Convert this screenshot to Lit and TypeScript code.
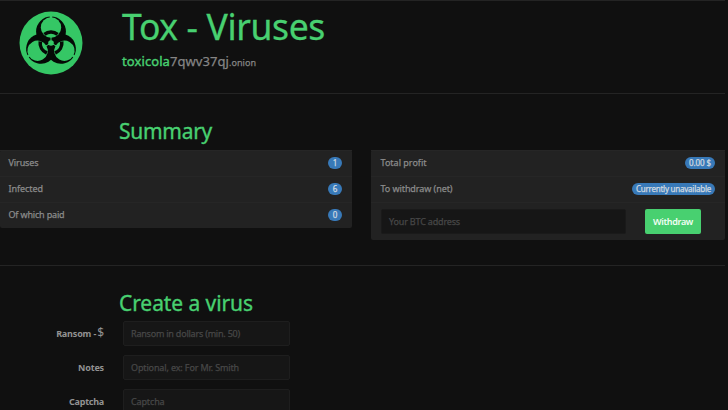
import { LitElement, html, css } from "lit";
import { customElement, property } from "lit/decorators.js";

/** Line of text whose tracking is adjusted to fill a given width. */
@customElement("fit-text")
class FitText extends LitElement {
  static styles = css`
    :host { display: inline-block; white-space: pre; }
    .t { display: inline-block; white-space: pre; }
  `;
  @property({ type: Number }) w = 0;
  @property() text = "";
  render() {
    return html`<span class="t">${this.text}</span>`;
  }
  updated() {
    const t = this.renderRoot.querySelector(".t") as HTMLElement;
    t.style.letterSpacing = "0px";
    const gap = (this.w - t.getBoundingClientRect().width) / this.text.length;
    t.style.letterSpacing = gap.toFixed(3) + "px";
  }
}

@customElement("bio-logo")
class BioLogo extends LitElement {
  static styles = css`
    :host, svg { display: block; }
    .g { fill: #35c765; }
    .gs { fill: none; stroke: #35c765; }
    .k { fill: #050a06; }
    .ks { fill: none; stroke: #050a06; }
  `;
  render() {
    return html`<svg width="64" height="64" viewBox="-32 -32 64 64">
      <defs>
        <g id="disc"><circle class="k" cy="-11.5" r="14.9" /></g>
        <g id="hole">
          <circle class="g" cy="-15.5" r="10.2" />
          <path class="gs" stroke-width="2.4" d="M0-23V-29" />
        </g>
        <path id="arc" class="ks" stroke-width="3.6" d="M-6.6-8.6A10.8 10.8 0 0 1 6.6-8.6" />
      </defs>
      <circle class="g" r="31.5" />
      <use href="#disc" /><use href="#disc" transform="rotate(120)" /><use href="#disc" transform="rotate(240)" />
      <use href="#hole" /><use href="#hole" transform="rotate(120)" /><use href="#hole" transform="rotate(240)" />
      <circle class="g" r="2.8" />
      <path class="gs" stroke-width="1" d="M0 0V-6M0 0L5.2 3M0 0L-5.2 3" transform="rotate(0)" />
      <use href="#arc" /><use href="#arc" transform="rotate(120)" /><use href="#arc" transform="rotate(240)" />
    </svg>`;
  }
}

const STATS = [
  { label: "Viruses", w: 30, value: "1" },
  { label: "Infected", w: 34.5, value: "6" },
  { label: "Of which paid", w: 56, value: "0" },
];
const FIELDS = [
  { label: "Ransom -", w: 40, hint: "Ransom in dollars (min. 50)", hw: 109, dollar: true },
  { label: "Notes", w: 26, hint: "Optional, ex: For Mr. Smith", hw: 108, dollar: false },
  { label: "Captcha", w: 35, hint: "Captcha", hw: 33.5, dollar: false },
];

@customElement("app-root")
class AppRoot extends LitElement {
  static styles = css`
    * { box-sizing: border-box; }
    :host {
      display: block; width: 728px; height: 410px; overflow: hidden;
      background: #101010; color: #8b8b8b;
      font: 9px/14px "Noto Sans", "Open Sans", sans-serif;
      -webkit-text-stroke: 0.25px currentColor;
    }
    .page { width: 725px; }
    header { display: flex; height: 94px; border-top: 1px solid #242424; border-bottom: 1px solid #242424; }
    .logo { margin: 10px 0 0 19px; }
    .brand { margin-left: 39px; }
    h1, h2 { margin: 0; font-weight: 400; color: #48d070; }
    h1 { height: 49px; font-size: 35.5px; line-height: 51px; -webkit-text-stroke-width: 0.3px; }
    .host { display: flex; align-items: baseline; font-size: 13px; line-height: 23px; color: #858585; }
    .host .a { color: #48d070; -webkit-text-stroke-width: 0.4px; }
    .host .c { font-size: 9px; }
    h2 { font-size: 21px; line-height: 28px; padding-left: 119px; -webkit-text-stroke-width: 0.35px; }
    .summary { height: 172px; padding-top: 23px; border-bottom: 1px solid #242424; }
    .cols { display: flex; gap: 19px; margin-top: 5px; align-items: flex-start; }
    .card { background: #222; border-radius: 2px; }
    .left { width: 352px; }
    .right { width: 354px; }
    .row { display: flex; justify-content: space-between; align-items: center; height: 26px; padding: 0 10px 2px 8.5px; border-top: 1px solid #262626; }
    .right .row { padding-left: 9.5px; }
    .badge {
      display: flex; justify-content: center; height: 12px; min-width: 14px; padding: 0 4px;
      border-radius: 6px; background: #3879b8; color: #d2dae0; font-size: 8px; line-height: 12px;
    }
    .pay { display: flex; height: 38px; padding: 6px 0 0 10px; border-top: 1px solid #262626; }
    .input { height: 25px; border: 1px solid #1e1e1e; border-radius: 2px; background: #161616; color: #474747; padding-left: 7px; line-height: 23px; }
    .pay .input { width: 245px; border-color: #1a1a1a; }
    .btn {
      width: 56px; height: 25px; margin-left: 19px; padding: 0; border: 0; border-radius: 2px; background: #48d070;
      color: #f2fff5; font: 600 9px/23px "Noto Sans", "Open Sans", sans-serif; -webkit-text-stroke-width: 0;
    }
    .create { padding-top: 23px; }
    .form { display: grid; gap: 9px; margin-top: 4px; }
    .field { display: flex; height: 25px; }
    .lab { display: flex; justify-content: flex-end; width: 104px; margin-right: 19px; font-weight: 700; line-height: 25px; color: #929292; -webkit-text-stroke-width: 0; }
    .dollar { font-size: 12px; font-weight: 400; line-height: 24px; margin-left: 1px; }
    .field .input { width: 167px; line-height: 24px; }
  `;
  render() {
    return html`<div class="page">
      <header>
        <bio-logo class="logo"></bio-logo>
        <div class="brand">
          <h1><fit-text w="203" text="Tox - Viruses"></fit-text></h1>
          <div class="host">
            <fit-text class="a" w="48" text="toxicola"></fit-text><fit-text w="59" text="7qwv37qj"></fit-text><fit-text class="c" w="27" text=".onion"></fit-text>
          </div>
        </div>
      </header>
      <section class="summary">
        <h2><fit-text w="93" text="Summary"></fit-text></h2>
        <div class="cols">
          <div class="card left">
            ${STATS.map((s) => html`<div class="row"><fit-text w=${s.w} text=${s.label}></fit-text><span class="badge">${s.value}</span></div>`)}
          </div>
          <div class="card right">
            <div class="row"><fit-text w="46" text="Total profit"></fit-text><span class="badge"><fit-text w="22" text="0.00 $"></fit-text></span></div>
            <div class="row"><fit-text w="72" text="To withdraw (net)"></fit-text><span class="badge"><fit-text w="75" text="Currently unavailable"></fit-text></span></div>
            <div class="pay">
              <div class="input"><fit-text w="71" text="Your BTC address"></fit-text></div>
              <button class="btn"><fit-text w="40" text="Withdraw"></fit-text></button>
            </div>
          </div>
        </div>
      </section>
      <section class="create">
        <h2><fit-text w="134" text="Create a virus"></fit-text></h2>
        <div class="form">
          ${FIELDS.map((f) => html`<div class="field">
            <span class="lab"><fit-text w=${f.w} text=${f.label}></fit-text>${f.dollar ? html`<span class="dollar">$</span>` : ""}</span>
            <div class="input"><fit-text w=${f.hw} text=${f.hint}></fit-text></div>
          </div>`)}
        </div>
      </section>
    </div>`;
  }
}
